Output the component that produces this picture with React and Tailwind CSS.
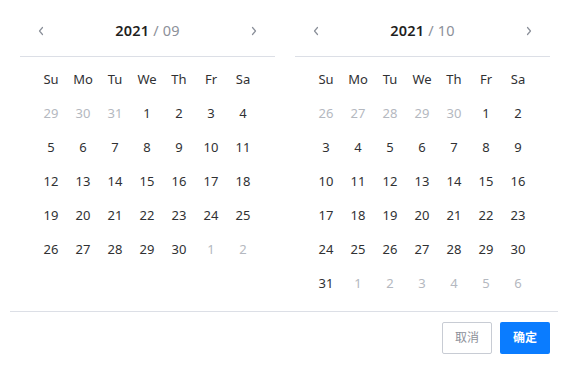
import React from 'react';

const weekDays = ['Su', 'Mo', 'Tu', 'We', 'Th', 'Fr', 'Sa'];

const buildDays = (year, month) => {
  // month is 1-based
  const first = new Date(year, month - 1, 1).getDay();
  const total = new Date(year, month, 0).getDate();
  const prevTotal = new Date(year, month - 1, 0).getDate();
  const cells = [];
  for (let i = first - 1; i >= 0; i--) cells.push({ d: prevTotal - i, muted: true });
  for (let d = 1; d <= total; d++) cells.push({ d, muted: false });
  const rows = Math.ceil(cells.length / 7);
  let n = 1;
  while (cells.length < rows * 7) cells.push({ d: n++, muted: true });
  return cells;
};

const Chevron = ({ dir }) => (
  <svg width="8" height="10" viewBox="0 0 8 10" fill="none">
    <path
      d={dir === 'left' ? 'M5.5 1.5 L2.5 5 L5.5 8.5' : 'M2.5 1.5 L5.5 5 L2.5 8.5'}
      stroke="#8a8f99"
      strokeWidth="1.2"
      strokeLinecap="round"
      strokeLinejoin="round"
    />
  </svg>
);

const MonthPanel = ({ year, month }) => {
  const days = buildDays(year, month);
  return (
    <div className="w-[255px] shrink-0">
      <div className="flex items-center justify-between h-[30px] mt-[16px] mb-[10px] px-[17px]">
        <button className="w-[8px] flex justify-center"><Chevron dir="left" /></button>
        <div className="text-[14.5px] tracking-[0.2px]">
          <span className="font-semibold text-[#1f1f1f]">{year}</span>
          <span className="text-[#8c9099]"> / {String(month).padStart(2, '0')}</span>
        </div>
        <button className="w-[8px] flex justify-center"><Chevron dir="right" /></button>
      </div>
      <div className="border-t border-[#dcdfe6]" />
      <div className="grid grid-cols-[repeat(7,32px)] mt-[6px] pl-[15px]">
        {weekDays.map((w) => (
          <div key={w} className="h-[34px] flex items-center justify-center text-[13px] text-[#303133]">{w}</div>
        ))}
        {days.map((c, i) => (
          <div
            key={i}
            className={`h-[34px] flex items-center justify-center text-[13px] ${c.muted ? 'text-[#b4b8c0]' : 'text-[#303133]'}`}
          >
            {c.d}
          </div>
        ))}
      </div>
    </div>
  );
};

const App = () => {
  return (
    <div className="w-[568px] h-[365px] bg-white" style={{ fontFamily: '"Noto Sans", "Noto Sans CJK SC", sans-serif' }}>
      <div className="flex gap-[20px] px-[20px] h-[301px]">
        <MonthPanel year={2021} month={9} />
        <MonthPanel year={2021} month={10} />
      </div>
      <div className="mx-[10px] mt-[10px] border-t border-[#dcdfe6] flex justify-end gap-[8px] pt-[10px] pr-[8px]">
        <button className="w-[50px] h-[32px] border border-[#c8ccd4] rounded-[2px] text-[12px] text-[#8c9099] bg-white">取消</button>
        <button className="w-[50px] h-[32px] rounded-[2px] text-[12px] font-semibold text-white bg-[#0a7cff]">确定</button>
      </div>
    </div>
  );
};

export default App;
